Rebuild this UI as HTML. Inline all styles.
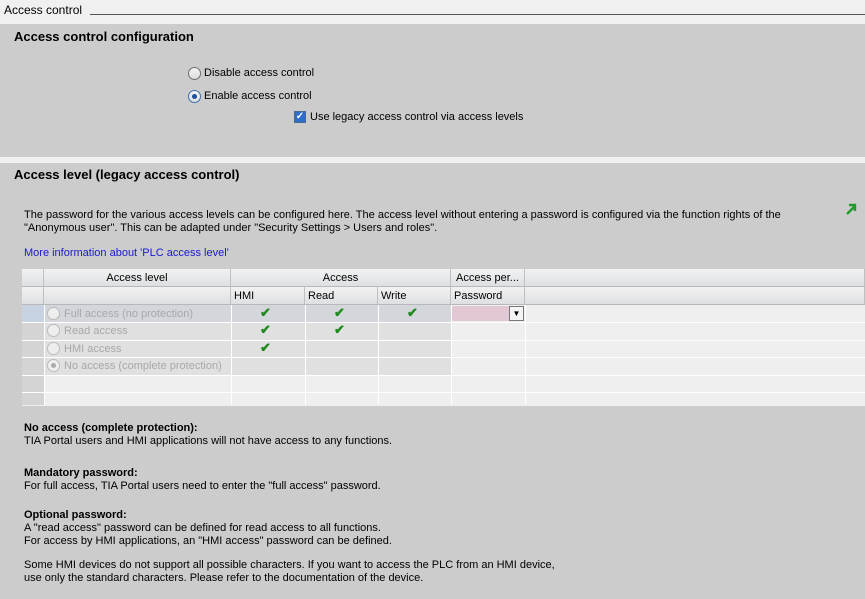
<!DOCTYPE html>
<html><head><style>
*{margin:0;padding:0;box-sizing:border-box}
body{width:865px;height:599px;overflow:hidden;background:#f0f0f0;font-family:"Liberation Sans",sans-serif;font-size:11px;color:#000;position:relative}
.a{position:absolute;white-space:nowrap}
.h{font-weight:bold;font-size:13px}
.sec{position:absolute;left:0;width:865px;background:#cccccc}
.rad{position:absolute;width:13px;height:13px;border-radius:50%;border:1px solid #6f6f6f;background:linear-gradient(#f4f4f4,#dcdcdc)}
.cell{position:absolute;border-right:1px solid #fff;border-bottom:1px solid #fff}
.hd{background:linear-gradient(#f2f2f2,#dde0e4);border-right:1px solid #c0c0c0;border-bottom:1px solid #b8b8b8}
.ck{position:absolute;color:#1e8a1e;font-weight:bold;font-size:13px}
.g{color:#a8a8a8}
</style></head><body>
<div class="a" style="left:4px;top:3px;font-size:12px">Access control</div>
<div class="a" style="left:90px;top:14px;width:775px;height:1px;background:#555"></div>
<div class="sec" style="top:24px;height:133px"></div>
<div class="a h" style="left:14px;top:29px">Access control configuration</div>
<div class="rad" style="left:188px;top:67px"></div>
<div class="a" style="left:204px;top:67px">Disable access control</div>
<div class="rad" style="left:188px;top:90px;border-color:#3a6fb0"><div style="position:absolute;left:3px;top:3px;width:5px;height:5px;border-radius:50%;background:#1c4f9c"></div></div>
<div class="a" style="left:204px;top:90px">Enable access control</div>
<div class="a" style="left:294px;top:111px;width:12px;height:12px;border:1px solid #4a6a90;background:#2d6ec8;color:#fff;font-size:10px;line-height:10px;text-align:center;font-weight:bold">✓</div>
<div class="a" style="left:310px;top:111px">Use legacy access control via access levels</div>
<div class="sec" style="top:163px;height:436px"></div>
<div class="a h" style="left:14px;top:167px">Access level (legacy access control)</div>
<div class="a" style="left:24px;top:209px;line-height:13px">The password for the various access levels can be configured here. The access level without entering a password is configured via the function rights of the<br>"Anonymous user". This can be adapted under "Security Settings &gt; Users and roles".</div>
<svg class="a" style="left:845px;top:203px" width="12" height="12"><path d="M2 11L10 3M4 2H10V8" stroke="#1f9a2a" stroke-width="2.4" fill="none"/></svg>
<div class="a" style="left:24px;top:247px;color:#1a1ad0">More information about 'PLC access level'</div>
<div class="a" style="left:22px;top:269px;width:843px;height:137px;background:#efefef"></div>
<div class="cell hd" style="left:22px;top:269px;width:22px;height:18px"></div>
<div class="cell hd" style="left:22px;top:287px;width:22px;height:18px"></div>
<div class="cell hd" style="left:44px;top:269px;width:187px;height:18px;text-align:center;padding-top:3px">Access level</div>
<div class="cell hd" style="left:231px;top:269px;width:220px;height:18px;text-align:center;padding-top:3px">Access</div>
<div class="cell hd" style="left:451px;top:269px;width:74px;height:18px;text-align:center;padding-top:3px">Access per...</div>
<div class="cell hd" style="left:525px;top:269px;width:340px;height:18px"></div>
<div class="cell hd" style="left:44px;top:287px;width:187px;height:18px"></div>
<div class="cell hd" style="left:231px;top:287px;width:74px;height:18px;padding:3px 0 0 3px">HMI</div>
<div class="cell hd" style="left:305px;top:287px;width:73px;height:18px;padding:3px 0 0 3px">Read</div>
<div class="cell hd" style="left:378px;top:287px;width:73px;height:18px;padding:3px 0 0 3px">Write</div>
<div class="cell hd" style="left:451px;top:287px;width:74px;height:18px;padding:3px 0 0 3px">Password</div>
<div class="cell hd" style="left:525px;top:287px;width:340px;height:18px"></div>
<div class="a" style="left:22px;top:305px;width:22px;height:100px;background:#d4d4d4"></div>
<div class="a" style="left:22px;top:305px;width:22px;height:17px;background:#c7d3e0"></div>
<div class="a" style="left:44px;top:305px;width:407px;height:17px;background:#d3d7db"></div>
<div class="a" style="left:44px;top:322px;width:407px;height:53px;background:#e0e0e0"></div>
<div class="a" style="left:452px;top:306px;width:57px;height:15px;background:#e2c8d4"></div>
<div class="a" style="left:509px;top:306px;width:15px;height:15px;border:1px solid #777;background:#f4f4f4;font-size:8px;text-align:center;line-height:13px">▼</div>
<div class="a" style="left:22px;top:322px;width:843px;height:1px;background:#fff"></div>
<div class="a" style="left:22px;top:340px;width:843px;height:1px;background:#fff"></div>
<div class="a" style="left:22px;top:357px;width:843px;height:1px;background:#fff"></div>
<div class="a" style="left:22px;top:375px;width:843px;height:1px;background:#fff"></div>
<div class="a" style="left:22px;top:392px;width:843px;height:1px;background:#fff"></div>
<div class="a" style="left:44px;top:305px;width:1px;height:100px;background:#fff"></div>
<div class="a" style="left:231px;top:305px;width:1px;height:100px;background:#fff"></div>
<div class="a" style="left:305px;top:305px;width:1px;height:100px;background:#fff"></div>
<div class="a" style="left:378px;top:305px;width:1px;height:100px;background:#fff"></div>
<div class="a" style="left:451px;top:305px;width:1px;height:100px;background:#fff"></div>
<div class="a" style="left:525px;top:305px;width:1px;height:100px;background:#fff"></div>
<div class="rad" style="left:47px;top:307px;border-color:#bbb;background:#eee"></div>
<div class="a g" style="left:64px;top:308px">Full access (no protection)</div>
<div class="rad" style="left:47px;top:324px;border-color:#bbb;background:#eee"></div>
<div class="a g" style="left:64px;top:325px">Read access</div>
<div class="rad" style="left:47px;top:342px;border-color:#bbb;background:#eee"></div>
<div class="a g" style="left:64px;top:343px">HMI access</div>
<div class="rad" style="left:47px;top:359px;border-color:#bbb;background:#eee"><div style="position:absolute;left:3px;top:3px;width:5px;height:5px;border-radius:50%;background:#aaa"></div></div>
<div class="a g" style="left:64px;top:360px">No access (complete protection)</div>
<div class="ck" style="left:260px;top:305px">✔</div><div class="ck" style="left:334px;top:305px">✔</div><div class="ck" style="left:407px;top:305px">✔</div>
<div class="ck" style="left:260px;top:322px">✔</div><div class="ck" style="left:334px;top:322px">✔</div>
<div class="ck" style="left:260px;top:340px">✔</div>
<div class="a" style="left:24px;top:422px;line-height:13px"><b>No access (complete protection):</b><br>TIA Portal users and HMI applications will not have access to any functions.</div>
<div class="a" style="left:24px;top:467px;line-height:13px"><b>Mandatory password:</b><br>For full access, TIA Portal users need to enter the "full access" password.</div>
<div class="a" style="left:24px;top:509px;line-height:13px"><b>Optional password:</b><br>A "read access" password can be defined for read access to all functions.<br>For access by HMI applications, an "HMI access" password can be defined.</div>
<div class="a" style="left:24px;top:559px;line-height:13px">Some HMI devices do not support all possible characters. If you want to access the PLC from an HMI device,<br>use only the standard characters. Please refer to the documentation of the device.</div>
</body></html>
